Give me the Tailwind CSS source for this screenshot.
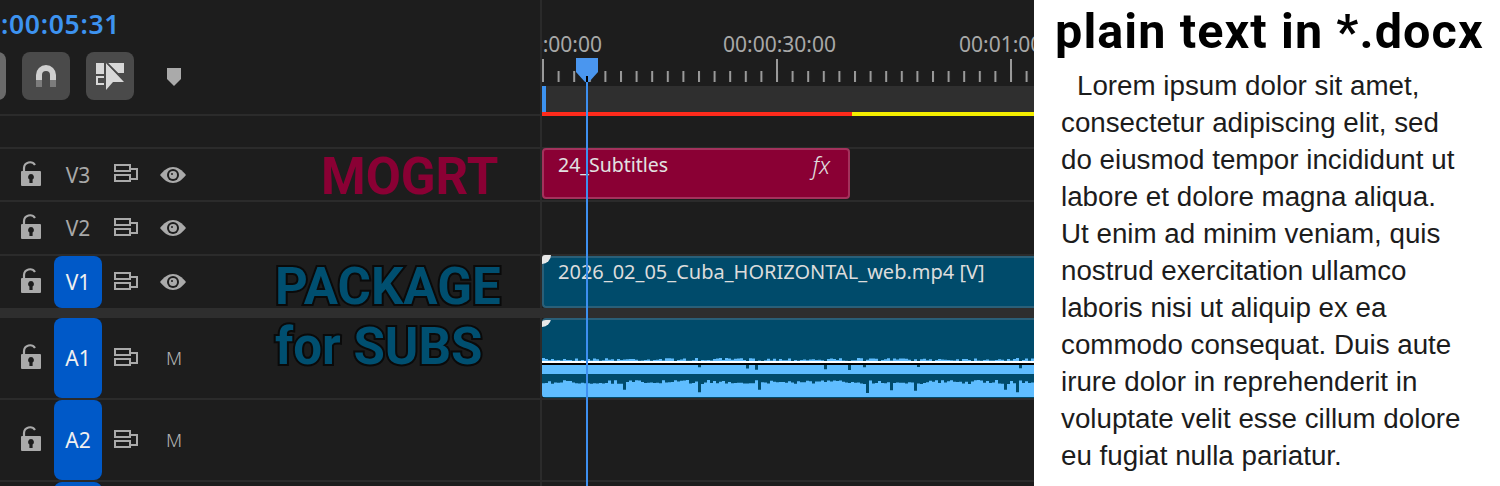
<!DOCTYPE html>
<html lang="en">
<head>
  <meta charset="UTF-8">
  <title>Timeline and plain text</title>
  <script src="https://cdn.jsdelivr.net/npm/@tailwindcss/browser@4"></script>
</head>
<body class="w-[1500px] h-[486px] overflow-hidden bg-white flex font-['Noto_Sans',sans-serif]">
  <!-- Timeline panel -->
  <div class="relative w-[1034px] h-[486px] overflow-hidden bg-[#1d1d1d] flex flex-col shrink-0">
    <!-- Header -->
    <div class="h-[114px] flex shrink-0">
      <div class="w-[541px] shrink-0 relative">
        <div class="h-[52px] pt-[6px] pl-[1px] text-[26.5px] tracking-[0.7px] leading-[36px] font-semibold text-[#3d93f0] whitespace-nowrap">:00:05:31</div>
        <div class="flex items-center h-[48px] -ml-[38px]">
          <div class="w-[44px] h-[48px] rounded-[8px] bg-[#6a6a6a]"></div>
          <div class="ml-[16px] w-[48px] h-[48px] rounded-[8px] bg-[#4a4a4a] flex items-center justify-center">
            <svg width="20" height="22" viewBox="0 0 20 22" fill="none">
              <path d="M3 15V10a7 7 0 0 1 14 0v5" stroke="#cfcfcf" stroke-width="6"/>
              <path d="M3 15v7M17 15v7" stroke="#7c7c7c" stroke-width="6"/>
            </svg>
          </div>
          <div class="ml-[16px] w-[48px] h-[48px] rounded-[8px] bg-[#4a4a4a] flex items-center justify-center">
            <svg width="28" height="27" viewBox="0 0 28 27">
              <path d="M0 0h8v11H0z" fill="#d8d8d8"/>
              <path d="M0 13h8v2H2v5h6v2H0z" fill="#d8d8d8"/>
              <path d="M10 0l18 19H17l-7 8z" fill="#d8d8d8"/>
              <path d="M12 0h16v10h-6z" fill="#d8d8d8"/>
              <path d="M11 0l12 12" stroke="#4a4a4a" stroke-width="1.2"/>
            </svg>
          </div>
          <svg class="ml-[33px] mt-[2px]" width="14" height="18" viewBox="0 0 14 18"><path d="M0 0h14v11l-7 7-7-7z" fill="#aaaaaa"/></svg>
        </div>
      </div>
      <div class="flex-1 border-l-2 border-[#2a2a2a] -ml-[1px] min-w-0 overflow-hidden">
        <div class="h-[59px] flex -ml-[53px] pt-[30px] text-[21px] leading-[28px] text-[#a8a8a8] whitespace-nowrap">
          <span class="w-[234px] shrink-0">00:00:00:00</span>
          <span class="w-[236px] shrink-0">00:00:30:00</span>
          <span class="w-[236px] shrink-0">00:01:00:00</span>
        </div>
        <svg class="block" width="492" height="23" viewBox="0 0 492 23">
          <defs>
            <pattern id="ticks" x="0" y="0" width="15.6" height="23" patternUnits="userSpaceOnUse">
              <rect x="0" y="12" width="2" height="11" fill="#9a9a9a"/>
            </pattern>
          </defs>
          <rect x="15" width="477" height="23" fill="url(#ticks)"/>
          <rect x="0" width="2" height="23" fill="#9a9a9a"/>
          <rect x="234" width="2" height="23" fill="#9a9a9a"/>
          <rect x="468" width="2" height="23" fill="#9a9a9a"/>
        </svg>
        <div class="mt-[4px] h-[28px] bg-[#2f2f2f] flex">
          <div class="w-[4px] bg-[#3d93f0]"></div>
        </div>
      </div>
    </div>
    <!-- Ruler colour line + empty row -->
    <div class="h-[2px] bg-[#2b2b2b] shrink-0"></div>
    <div class="h-[31px] flex shrink-0">
      <div class="w-[540px] shrink-0"></div>
      <div class="w-[2px] bg-[#2b2b2b]"></div>
    </div>
    <div class="h-[2px] bg-[#2b2b2b] shrink-0"></div>

    <!-- V3 -->
    <div class="h-[51px] flex shrink-0">
      <div class="w-[540px] shrink-0 flex items-center pl-[21px]">
        <svg class="-mt-[3px]" width="20" height="25" viewBox="0 0 20 25"><path d="M3 11V7a6 6 0 0 1 11-3" fill="none" stroke="#aaaaaa" stroke-width="2.2"/><rect y="10" width="20" height="15" rx="1" fill="#aaaaaa"/><path d="M10 13a3 3 0 0 1 1.6 5.5V22H8.4v-3.5A3 3 0 0 1 10 13z" fill="#1d1d1d"/></svg>
        <div class="w-[48px] ml-[13px] mt-[2px] text-center text-[21px] text-[#a8a8a8]">V3</div>
        <svg class="ml-[12px] -mt-[3px]" width="24" height="18" viewBox="0 0 24 18" fill="none" stroke="#aaaaaa" stroke-width="2"><rect x="1" y="1" width="15" height="6"/><rect x="1" y="11" width="15" height="6"/><path d="M16 5h7v10h-7"/></svg>
        <svg class="ml-[22px]" width="26" height="16" viewBox="0 0 26 16"><path d="M0 8C4 3 8 0 13 0s9 3 13 8c-4 5-8 8-13 8S4 13 0 8z" fill="#aaaaaa"/><circle cx="13" cy="8" r="6" fill="#1d1d1d"/><circle cx="13" cy="8" r="4" fill="#aaaaaa"/><circle cx="12" cy="7" r="1" fill="#1d1d1d"/></svg>
      </div>
      <div class="w-[2px] bg-[#2b2b2b]"></div>
      <div class="flex-1 pr-[184px]">
        <div class="h-[51px] -mt-[1px] rounded-[4px] bg-[#8a0034] border-2 border-[#a3325c] flex items-start justify-between pl-[14px] pr-[18px] pt-[1px] text-[19.5px] leading-[28px] text-[#e2e2e2]">
          <span>24_Subtitles</span><span class="italic font-light text-[23px]">fx</span>
        </div>
      </div>
    </div>
    <div class="h-[2px] bg-[#2b2b2b] shrink-0"></div>

    <!-- V2 -->
    <div class="h-[52px] flex shrink-0">
      <div class="w-[540px] shrink-0 flex items-center pl-[21px]">
        <svg class="-mt-[3px]" width="20" height="25" viewBox="0 0 20 25"><path d="M3 11V7a6 6 0 0 1 11-3" fill="none" stroke="#aaaaaa" stroke-width="2.2"/><rect y="10" width="20" height="15" rx="1" fill="#aaaaaa"/><path d="M10 13a3 3 0 0 1 1.6 5.5V22H8.4v-3.5A3 3 0 0 1 10 13z" fill="#1d1d1d"/></svg>
        <div class="w-[48px] ml-[13px] mt-[2px] text-center text-[21px] text-[#a8a8a8]">V2</div>
        <svg class="ml-[12px] -mt-[3px]" width="24" height="18" viewBox="0 0 24 18" fill="none" stroke="#aaaaaa" stroke-width="2"><rect x="1" y="1" width="15" height="6"/><rect x="1" y="11" width="15" height="6"/><path d="M16 5h7v10h-7"/></svg>
        <svg class="ml-[22px]" width="26" height="16" viewBox="0 0 26 16"><path d="M0 8C4 3 8 0 13 0s9 3 13 8c-4 5-8 8-13 8S4 13 0 8z" fill="#aaaaaa"/><circle cx="13" cy="8" r="6" fill="#1d1d1d"/><circle cx="13" cy="8" r="4" fill="#aaaaaa"/><circle cx="12" cy="7" r="1" fill="#1d1d1d"/></svg>
      </div>
      <div class="w-[2px] bg-[#2b2b2b]"></div>
    </div>
    <div class="h-[2px] bg-[#2b2b2b] shrink-0"></div>

    <!-- V1 -->
    <div class="h-[52px] flex shrink-0">
      <div class="w-[540px] shrink-0 flex items-center pl-[21px]">
        <svg class="-mt-[4px]" width="20" height="25" viewBox="0 0 20 25"><path d="M3 11V7a6 6 0 0 1 11-3" fill="none" stroke="#aaaaaa" stroke-width="2.2"/><rect y="10" width="20" height="15" rx="1" fill="#aaaaaa"/><path d="M10 13a3 3 0 0 1 1.6 5.5V22H8.4v-3.5A3 3 0 0 1 10 13z" fill="#1d1d1d"/></svg>
        <div class="w-[48px] h-[52px] ml-[13px] pt-[2px] rounded-[8px] bg-[#0059c8] flex items-center justify-center text-[21px] text-[#f0f0f0]">V1</div>
        <svg class="ml-[12px] -mt-[3px]" width="24" height="18" viewBox="0 0 24 18" fill="none" stroke="#aaaaaa" stroke-width="2"><rect x="1" y="1" width="15" height="6"/><rect x="1" y="11" width="15" height="6"/><path d="M16 5h7v10h-7"/></svg>
        <svg class="ml-[22px]" width="26" height="16" viewBox="0 0 26 16"><path d="M0 8C4 3 8 0 13 0s9 3 13 8c-4 5-8 8-13 8S4 13 0 8z" fill="#aaaaaa"/><circle cx="13" cy="8" r="6" fill="#1d1d1d"/><circle cx="13" cy="8" r="4" fill="#aaaaaa"/><circle cx="12" cy="7" r="1" fill="#1d1d1d"/></svg>
      </div>
      <div class="w-[2px] bg-[#2b2b2b]"></div>
      <div class="flex-1 relative border-2 border-r-0 border-[#2a5f78] rounded-l-[4px] bg-[#004b6b] pl-[14px] text-[20px] leading-[28px] text-[#dcdcdc] whitespace-nowrap">
        <span>2026_02_05_Cuba_HORIZONTAL_web.mp4 [V]</span>
        <div class="absolute -left-[2px] -top-[3px] w-[9px] h-[9px] bg-[#e8e8e8] rounded-br-[9px] rounded-tl-[3px]"></div>
      </div>
    </div>
    <div class="h-[10px] bg-[#2e2e2e] shrink-0"></div>

    <!-- A1 -->
    <div class="h-[80px] flex shrink-0">
      <div class="w-[540px] shrink-0 flex items-center pl-[21px]">
        <svg class="-mt-[4px]" width="20" height="25" viewBox="0 0 20 25"><path d="M3 11V7a6 6 0 0 1 11-3" fill="none" stroke="#aaaaaa" stroke-width="2.2"/><rect y="10" width="20" height="15" rx="1" fill="#aaaaaa"/><path d="M10 13a3 3 0 0 1 1.6 5.5V22H8.4v-3.5A3 3 0 0 1 10 13z" fill="#1d1d1d"/></svg>
        <div class="w-[48px] h-[80px] ml-[13px] pt-[2px] rounded-[8px] bg-[#0059c8] flex items-center justify-center text-[21px] text-[#f0f0f0]">A1</div>
        <svg class="ml-[12px] -mt-[3px]" width="24" height="18" viewBox="0 0 24 18" fill="none" stroke="#aaaaaa" stroke-width="2"><rect x="1" y="1" width="15" height="6"/><rect x="1" y="11" width="15" height="6"/><path d="M16 5h7v10h-7"/></svg>
        <div class="w-[26px] ml-[23px] text-center text-[18.5px] font-light text-[#b4b4b4]">M</div>
      </div>
      <div class="w-[2px] bg-[#2b2b2b]"></div>
      <div class="flex-1 relative overflow-hidden rounded-l-[4px] bg-[#004b6b] border-t-2 border-[#2a5f78]">
        <svg class="absolute left-0 top-[-2px]" width="492" height="80" viewBox="0 0 492 80">
          <path id="waveTop" fill="#5fbdff"/>
          <path id="waveBottom" fill="#5fbdff"/>
          <rect y="43" width="492" height="2" fill="#ffffff"/>
          <rect y="45" width="492" height="2" fill="#000000"/>
        </svg>
        <div class="absolute -left-[0px] -top-[2px] w-[9px] h-[9px] bg-[#e8e8e8] rounded-br-[9px] rounded-tl-[3px]"></div>
      </div>
    </div>
    <div class="h-[2px] bg-[#2b2b2b] shrink-0"></div>

    <!-- A2 -->
    <div class="h-[80px] flex shrink-0">
      <div class="w-[540px] shrink-0 flex items-center pl-[21px]">
        <svg class="-mt-[4px]" width="20" height="25" viewBox="0 0 20 25"><path d="M3 11V7a6 6 0 0 1 11-3" fill="none" stroke="#aaaaaa" stroke-width="2.2"/><rect y="10" width="20" height="15" rx="1" fill="#aaaaaa"/><path d="M10 13a3 3 0 0 1 1.6 5.5V22H8.4v-3.5A3 3 0 0 1 10 13z" fill="#1d1d1d"/></svg>
        <div class="w-[48px] h-[80px] ml-[13px] pt-[2px] rounded-[8px] bg-[#0059c8] flex items-center justify-center text-[21px] text-[#f0f0f0]">A2</div>
        <svg class="ml-[12px] -mt-[3px]" width="24" height="18" viewBox="0 0 24 18" fill="none" stroke="#aaaaaa" stroke-width="2"><rect x="1" y="1" width="15" height="6"/><rect x="1" y="11" width="15" height="6"/><path d="M16 5h7v10h-7"/></svg>
        <div class="w-[26px] ml-[23px] text-center text-[18.5px] font-light text-[#b4b4b4]">M</div>
      </div>
      <div class="w-[2px] bg-[#2b2b2b]"></div>
    </div>
    <div class="h-[2px] bg-[#2b2b2b] shrink-0"></div>

    <!-- A3, cut off -->
    <div class="flex-1 flex">
      <div class="w-[540px] shrink-0 pl-[54px]"><div class="w-[48px] h-[20px] rounded-[8px] bg-[#0059c8]"></div></div>
      <div class="w-[2px] bg-[#2b2b2b]"></div>
    </div>

    <!-- Ruler colour bar over the row line -->
    <div class="absolute left-[542px] top-[112px] right-0 h-[4px] flex">
      <div class="w-[310px] bg-[#ff2b1c]"></div>
      <div class="flex-1 bg-[#f4ee00]"></div>
    </div>

    <!-- Overlaid labels -->
    <div class="absolute left-[321px] top-[147px] text-[51px] leading-[60px] font-bold font-['Roboto',sans-serif] text-[#8a0034] whitespace-nowrap">MOGRT</div>
    <div class="absolute left-[275px] top-[257px] text-[51px] leading-[60px] font-bold font-['Roboto',sans-serif] text-[#004f70] whitespace-nowrap [-webkit-text-stroke:4px_#0a0a0a] [paint-order:stroke_fill]">PACKAGE</div>
    <div class="absolute left-[275px] top-[317px] text-[51px] leading-[60px] font-bold font-['Roboto',sans-serif] text-[#004f70] whitespace-nowrap [-webkit-text-stroke:4px_#0a0a0a] [paint-order:stroke_fill]">for SUBS</div>

    <!-- Playhead -->
    <svg class="absolute left-[576px] top-[58px]" width="22" height="24" viewBox="0 0 22 24"><path d="M0 0h22v14l-9 10H9L0 14z" fill="#4a96ef"/><rect x="10" y="18" width="2" height="6" fill="#000000"/></svg>
    <div class="absolute left-[586px] top-[82px] bottom-0 w-[2px] bg-[#3d8ff0]"></div>
  </div>

  <!-- Text panel -->
  <div class="flex-1 min-w-0 bg-white pl-[21px] text-black">
    <h1 class="text-[48.5px] tracking-[1.1px] leading-[56px] mt-[4px] font-bold font-['Roboto',sans-serif] whitespace-nowrap">plain text in *.docx</h1>
    <p class="mt-[7px] ml-[6px] w-[405px] text-[27.75px] leading-[37px] indent-[16px] text-[#1c1c1c] font-['Liberation_Sans',sans-serif]">Lorem ipsum dolor sit amet, consectetur adipiscing elit, sed do eiusmod tempor incididunt ut labore et dolore magna aliqua. Ut enim ad minim veniam, quis nostrud exercitation ullamco laboris nisi ut aliquip ex ea commodo consequat. Duis aute irure dolor in reprehenderit in voluptate velit esse cillum dolore eu fugiat nulla pariatur.</p>
  </div>

  <script>
    // jagged waveform, same every load
    let seed = 7;
    function rnd() {
      seed = (seed * 16807) % 2147483647;
      return seed / 2147483647;
    }
    function wave(top, bottom, range, notch) {
      let d = `M0 ${bottom}`;
      for (let x = 0; x <= 492; x += 3) {
        let y = top + rnd() * range;
        if (rnd() < 0.04) y += notch;
        d += `L${x} ${y.toFixed(1)}L${x + 3} ${y.toFixed(1)}`;
      }
      return d + `L492 ${bottom}Z`;
    }
    document.getElementById('waveTop').setAttribute('d', wave(40, 56, 3, 9));
    document.getElementById('waveBottom').setAttribute('d', wave(62, 79, 4, 9));
  </script>
</body>
</html>
